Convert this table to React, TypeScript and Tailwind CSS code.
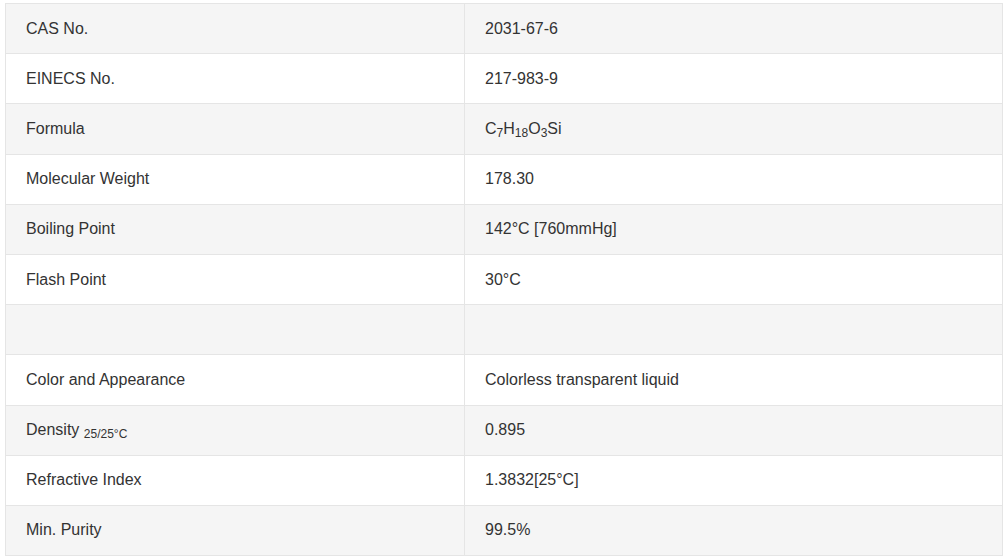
import React from "react"

type Row = { label: React.ReactNode; value: React.ReactNode }

const rows: Row[] = [
    { label: "CAS No.", value: "2031-67-6" },
    { label: "EINECS No.", value: "217-983-9" },
    {
        label: "Formula",
        value: (
            <>
                C<sub>7</sub>H<sub>18</sub>O<sub>3</sub>Si
            </>
        ),
    },
    { label: "Molecular Weight", value: "178.30" },
    { label: "Boiling Point", value: "142°C [760mmHg]" },
    { label: "Flash Point", value: "30°C" },
    { label: "", value: "" },
    { label: "Color and Appearance", value: "Colorless transparent liquid" },
    {
        label: (
            <>
                Density <sub>25/25°C</sub>
            </>
        ),
        value: "0.895",
    },
    { label: "Refractive Index", value: "1.3832[25°C]" },
    { label: "Min. Purity", value: "99.5%" },
]

export default function App() {
    return (
        <div className="min-h-screen bg-white pt-[3px] pl-[5px] font-['Liberation_Sans',Arial,sans-serif] text-[16px] text-[#333]">
            <table className="w-[998px] border-collapse">
                <tbody>
                    {rows.map((row, i) => (
                        <tr key={i} className={`h-[50.2px] ${i % 2 === 0 ? "bg-[#f5f5f5]" : "bg-white"}`}>
                            <td className="w-[459px] border border-[#e5e5e5] px-5 align-middle">{row.label}</td>
                            <td className="border border-[#e5e5e5] px-5 align-middle">{row.value}</td>
                        </tr>
                    ))}
                </tbody>
            </table>
        </div>
    )
}
